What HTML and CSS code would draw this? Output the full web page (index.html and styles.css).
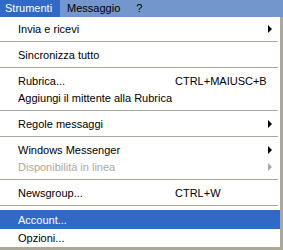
FILE: index.html
```html
<!DOCTYPE html>
<html lang="it">
<head>
    <meta charset="UTF-8">
    <title>Strumenti</title>
    <link rel="stylesheet" href="styles.css">
</head>
<body>
    <div class="menubar">
        <span class="top-item active">Strumenti</span>
        <span class="top-item">Messaggio</span>
        <span class="top-item">?</span>
    </div>

    <div class="dropdown">
        <ul class="menu">
            <li class="item"><span class="label">Invia e ricevi</span><span class="arrow"></span></li>
            <li class="sep"></li>
            <li class="item"><span class="label">Sincronizza tutto</span></li>
            <li class="sep"></li>
            <li class="item"><span class="label">Rubrica...</span><span class="key">CTRL+MAIUSC+B</span></li>
            <li class="item"><span class="label">Aggiungi il mittente alla Rubrica</span></li>
            <li class="sep"></li>
            <li class="item"><span class="label">Regole messaggi</span><span class="arrow"></span></li>
            <li class="sep"></li>
            <li class="item"><span class="label">Windows Messenger</span><span class="arrow"></span></li>
            <li class="item disabled"><span class="label">Disponibilità in linea</span><span class="arrow"></span></li>
            <li class="sep"></li>
            <li class="item"><span class="label">Newsgroup...</span><span class="key">CTRL+W</span></li>
            <li class="sep"></li>
            <li class="item selected"><span class="label">Account...</span></li>
            <li class="item"><span class="label">Opzioni...</span></li>
        </ul>
    </div>
</body>
</html>
```

FILE: styles.css
```css
body {
    margin: 0;
    padding: 0;
    width: 283px;
    height: 250px;
    overflow: hidden;
    background: #aca899;
    font-family: "Liberation Sans", Arial, sans-serif;
    font-size: 11px;
    color: #000;
}

.menubar {
    display: flex;
    height: 17px;
    background: #7396cc;
}

.top-item {
    padding: 0 9px 0 7px;
    line-height: 17px;
}

.active {
    background: #316ac5;
    color: #fff;
    padding: 0 8px 0 5px;
}

.dropdown {
    width: 280px;
    height: 230px;
    background: #fff;
    box-sizing: border-box;
    padding-top: 3px;
}

.menu {
    list-style: none;
    margin: 0;
    padding: 0;
}

.item {
    display: flex;
    align-items: center;
    height: 17px;
    padding-left: 18px;
}

.label {
    flex: 1;
    white-space: nowrap;
}

.key {
    width: 105px;
    white-space: nowrap;
}

.arrow {
    width: 0;
    height: 0;
    margin-right: 8px;
    border-top: 4px solid transparent;
    border-bottom: 4px solid transparent;
    border-left: 4px solid #000;
}

.disabled {
    color: #aca899;
}

.disabled .arrow {
    border-left-color: #aca899;
}

.selected {
    background: #316ac5;
    color: #fff;
    height: 19px;
}

.sep {
    height: 9px;
    display: flex;
    align-items: center;
}

.sep::before {
    content: "";
    display: block;
    width: 278px;
    height: 1px;
    background: #aca899;
}
```
